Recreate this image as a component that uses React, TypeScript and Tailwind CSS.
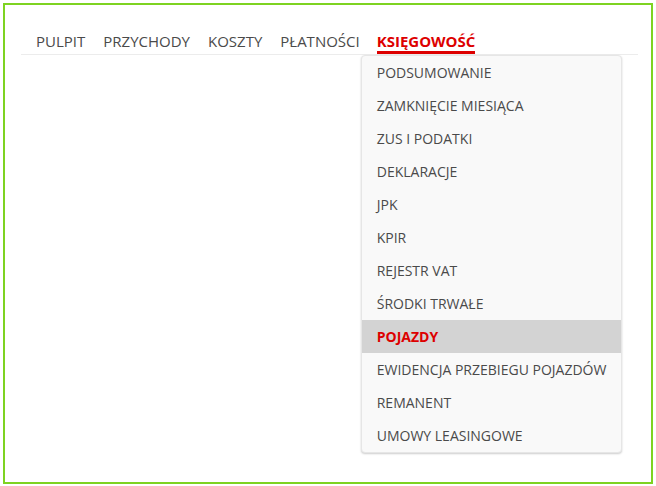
import React from 'react';

const navItems = ['PULPIT', 'PRZYCHODY', 'KOSZTY', 'PŁATNOŚCI'];

const menuItems = [
  'PODSUMOWANIE',
  'ZAMKNIĘCIE MIESIĄCA',
  'ZUS I PODATKI',
  'DEKLARACJE',
  'JPK',
  'KPIR',
  'REJESTR VAT',
  'ŚRODKI TRWAŁE',
  'POJAZDY',
  'EWIDENCJA PRZEBIEGU POJAZDÓW',
  'REMANENT',
  'UMOWY LEASINGOWE',
];

export default function App() {
  return (
    <div className="w-[656px] h-[486px] bg-white pt-[3px] pl-[3px]" style={{ fontFamily: '"Open Sans", sans-serif' }}>
      <div className="w-[650px] h-[481px] border-2 border-[#7ed321]">
        <ul className="ml-[16px] mt-[24px] w-[617px] flex border-b border-[#ececec] pl-[6px]">
          {navItems.map((item) => (
            <li key={item} className="px-[9px] pt-[2px] pb-[3px] text-[15px] leading-[20px] text-[#4a4a4a]">
              {item}
            </li>
          ))}
          <li className="relative px-[9px] pt-[2px] -ml-px">
            <span className="block border-b-[3px] border-[#dd0000] text-[15px] leading-[20px] font-bold text-[#dd0000]">
              KSIĘGOWOŚĆ
            </span>
            <div className="absolute left-[-7px] top-[26px] w-[261px] rounded-[4px] border border-[#e6e6e6] bg-[#f9f9f9] shadow-[0_1px_2px_rgba(0,0,0,0.2)] z-10">
              {menuItems.map((m) => (
                <div
                  key={m}
                  className={
                    m === 'POJAZDY'
                      ? 'h-[33px] flex items-center pl-[15px] text-[14px] font-bold text-[#dd0000] bg-[#d3d3d3]'
                      : 'h-[33px] flex items-center pl-[15px] text-[14px] text-[#4a4a4a]'
                  }
                >
                  {m}
                </div>
              ))}
            </div>
          </li>
        </ul>
      </div>
    </div>
  );
}
